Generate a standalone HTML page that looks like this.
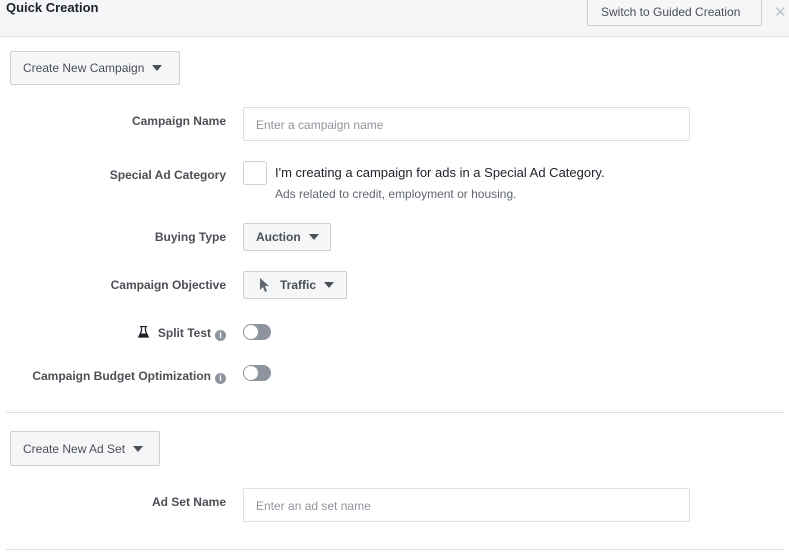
<!DOCTYPE html>
<html><head><meta charset="utf-8"><style>
*{box-sizing:border-box;margin:0;padding:0}
body{width:789px;height:552px;background:#fff;font-family:"Liberation Sans",Arial,sans-serif;position:relative;overflow:hidden;color:#4b4f56}
.a{position:absolute}
.hdr{left:0;top:0;width:789px;height:37px;background:#f5f6f7;border-bottom:1px solid #dddfe2}
.btn{position:absolute;background:#f5f6f7;border:1px solid #ccd0d5;border-radius:2px;font-size:12px;color:#4b4f56;display:flex;align-items:center;padding-left:12px}
.b{font-weight:bold}
.tri{display:inline-block;width:0;height:0;border-left:5px solid transparent;border-right:5px solid transparent;border-top:6px solid #4b4f56;margin-left:8px}
.lbl{position:absolute;right:563px;font-size:12px;font-weight:bold;color:#4b4f56;white-space:nowrap}
.inp{position:absolute;left:243px;width:447px;height:34px;border:1px solid #dddfe2;border-radius:2px;font-size:12px;color:#90949c;padding:10px 12px}
.tog{position:absolute;left:243px;width:28px;height:16px;border-radius:8px;background:#8d949e}
.tog:after{content:"";position:absolute;left:1px;top:1px;width:14px;height:14px;border-radius:7px;background:#fff}
.info{display:inline-block;width:11px;height:11px;border-radius:6px;background:#8d949e;color:#fff;font-size:9px;text-align:center;line-height:11px;margin-left:4px;vertical-align:-1px}
.line{position:absolute;left:6px;width:779px;height:1px;background:#dddfe2}
</style></head><body>
<div class="a hdr"></div>
<div class="a" style="left:6px;top:0;font-size:13px;font-weight:bold;color:#1d2129">Quick Creation</div>
<div class="btn" style="left:587px;top:-2px;width:175px;height:28px;padding-left:13px;background:#f5f6f7">Switch to Guided Creation</div>
<div class="a" style="left:774px;top:3px;font-size:15px;color:#bec2c9">✕</div>

<div class="btn" style="left:10px;top:51px;width:170px;height:34px">Create New Campaign<span class="tri"></span></div>

<div class="lbl" style="top:114px">Campaign Name</div>
<div class="inp" style="top:107px">Enter a campaign name</div>

<div class="lbl" style="top:168px">Special Ad Category</div>
<div class="a" style="left:243px;top:161px;width:24px;height:24px;border:1px solid #ccd0d5;border-radius:3px"></div>
<div class="a" style="left:275px;top:165px;font-size:13px;color:#1d2129">I'm creating a campaign for ads in a Special Ad Category.</div>
<div class="a" style="left:275px;top:187px;font-size:12px;color:#606770">Ads related to credit, employment or housing.</div>

<div class="lbl" style="top:230px">Buying Type</div>
<div class="btn b" style="left:243px;top:223px;width:88px;height:28px">Auction<span class="tri"></span></div>

<div class="lbl" style="top:278px">Campaign Objective</div>
<div class="btn b" style="left:243px;top:271px;width:104px;height:28px;padding-left:16px"><svg width="10" height="14" viewBox="0 0 10 14"><path d="M0 0L0 12L3 9L5 14L7 13L5 8L9 8Z" fill="#606770"/></svg><span style="margin-left:10px">Traffic</span><span class="tri"></span></div>

<div class="lbl" style="top:326px"><svg width="11" height="12" viewBox="0 0 11 12" style="vertical-align:-1px;margin-right:9px"><path d="M2 0.5H9M3.5 0.5V5L0.8 11H10.2L7.5 5V0.5" stroke="#1d2129" stroke-width="1.3" fill="none"/><path d="M2 7.5H9L10 11H1Z" fill="#1d2129"/></svg>Split Test<span class="info">i</span></div>
<div class="tog" style="top:324px"></div>

<div class="lbl" style="top:369px">Campaign Budget Optimization<span class="info">i</span></div>
<div class="tog" style="top:365px"></div>

<div class="line" style="top:412px"></div>

<div class="btn" style="left:10px;top:431px;width:150px;height:35px">Create New Ad Set<span class="tri"></span></div>

<div class="lbl" style="top:495px">Ad Set Name</div>
<div class="inp" style="top:488px">Enter an ad set name</div>

<div class="line" style="top:549px"></div>
</body></html>
